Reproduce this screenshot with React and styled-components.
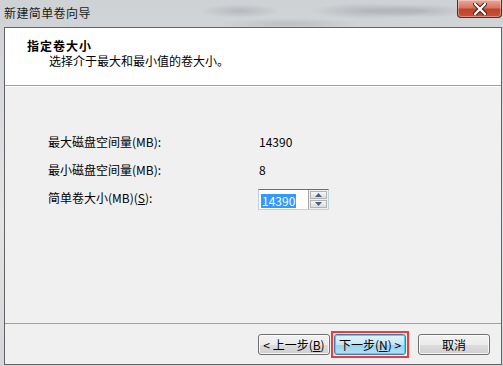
import React from 'react';
import styled, { createGlobalStyle } from 'styled-components';

const GlobalStyle = createGlobalStyle`
	html, body {
		margin: 0;
		padding: 0;
		background: #d6d8da;
	}
	body {
		font-family: "Noto Sans CJK SC", "DejaVu Sans", sans-serif;
		font-size: 12px;
		color: #000;
	}
`;

const Frame = styled.div`
	width: 503px;
	height: 366px;
	box-sizing: border-box;
	padding: 0 1px 1px 4px;
	display: flex;
	flex-direction: column;
	background:
		radial-gradient(ellipse 60px 8px at 370px 11px, rgba(120, 124, 130, 0.35), transparent),
		radial-gradient(ellipse 40px 7px at 240px 11px, rgba(120, 124, 130, 0.3), transparent),
		radial-gradient(ellipse 70px 6px at 290px 24px, rgba(120, 124, 130, 0.25), transparent),
		radial-gradient(ellipse 50px 7px at 420px 11px, rgba(120, 124, 130, 0.3), transparent),
		linear-gradient(180deg, #cfd2d5 0%, #e2e4e6 60%, #d4d6d9 100%);
`;

const TitleBar = styled.div`
	height: 27px;
	display: flex;
	justify-content: space-between;
	align-items: flex-start;
	flex-shrink: 0;
`;

const TitleText = styled.div`
	padding-top: 6px;
	font-size: 12px;
	line-height: 14px;
	letter-spacing: 0.4px;
	color: #1a1a1a;
`;

const CloseButton = styled.div`
	width: 45px;
	height: 18px;
	box-sizing: border-box;
	border: 1px solid #5a2a22;
	border-top: none;
	border-radius: 0 0 4px 4px;
	background: linear-gradient(180deg, #e9a899 0%, #d77662 45%, #c2412a 55%, #c9523a 100%);
	box-shadow: inset 0 0 0 1px rgba(255, 255, 255, 0.35);
	display: flex;
	align-items: center;
	justify-content: center;
`;

const Client = styled.div`
	flex: 1;
	display: flex;
	flex-direction: column;
	border: 1px solid #636363;
	background: #f0f0f0;
`;

const Header = styled.div`
	height: 58px;
	box-sizing: border-box;
	padding: 11px 0 0 22px;
	background: #fff;
	border-bottom: 1px solid #a0a0a0;
`;

const HeaderTitle = styled.div`
	font-size: 12px;
	line-height: 14px;
	font-weight: bold;
	letter-spacing: 1px;
`;

const HeaderSub = styled.div`
	margin: 1px 0 0 22px;
	font-size: 12px;
	line-height: 14px;
`;

const Body = styled.div`
	flex: 1;
	padding: 41px 0 0 43px;
	border-top: 1px solid #fff;
`;

const Row = styled.div`
	height: 28px;
	display: grid;
	grid-template-columns: 210px auto;
	align-items: center;
`;

const Label = styled.span`
	font-size: 12px;
	line-height: 14px;
`;

const Value = styled.span`
	padding-left: 1px;
	font-size: 12px;
	line-height: 14px;
`;

const Underline = styled.span`
	text-decoration: underline;
`;

const SpinBox = styled.div`
	display: flex;
	width: 71px;
	height: 21px;
	box-sizing: border-box;
	margin-top: 3px;
	border: 1px solid #b7d3ea;
	border-top-color: #3d7bad;
	background: #fff;
`;

const SpinInput = styled.div`
	flex: 1;
	padding: 2px 0 0 2px;
`;

const Selected = styled.span`
	display: inline-block;
	background: #3399ff;
	color: #fff;
	font-size: 12px;
	line-height: 14px;
	padding: 0 1px;
`;

const SpinButtons = styled.div`
	width: 17px;
	display: flex;
	flex-direction: column;
	gap: 1px;
	padding: 1px;
	background: #f0f0f0;
	border-left: 1px solid #a9a9a9;
`;

const SpinButton = styled.div`
	flex: 1;
	display: flex;
	align-items: center;
	justify-content: center;
	border: 1px solid #b4b4b4;
	background: linear-gradient(180deg, #f6f6f6, #dcdcdc);
`;

const Footer = styled.div`
	height: 41px;
	box-sizing: border-box;
	border-top: 1px solid #a0a0a0;
	padding: 10px 11px 0 0;
	display: flex;
	justify-content: flex-end;
	align-items: flex-start;
	gap: 1px;
`;

const Marker = styled.div`
	margin-top: -3px;
	padding: 1px;
	border: 2px solid #ee3b3b;
`;

const Button = styled.div`
	width: 72px;
	height: 21px;
	box-sizing: border-box;
	border: 1px solid ${({ focused }) => (focused ? '#3c7fb1' : '#707070')};
	border-radius: 3px;
	background: ${({ focused }) =>
		focused
			? 'linear-gradient(180deg, #e5f4fc 0%, #c4e5f6 50%, #98d1ef 51%, #b3e0f7 100%)'
			: 'linear-gradient(180deg, #f2f2f2 0%, #ebebeb 50%, #dddddd 51%, #cfcfcf 100%)'};
	box-shadow: inset 0 0 0 1px ${({ focused }) => (focused ? '#48d4f5' : 'rgba(255,255,255,0.8)')};
	display: flex;
	align-items: center;
	justify-content: center;
	font-size: 12px;
	line-height: 14px;
	margin-left: ${({ gapLeft }) => gapLeft || 0}px;
`;

const Arrow = ({ up }) => (
	<svg width="7" height="4" viewBox="0 0 7 4">
		<path d={up ? 'M0 4 L3.5 0 L7 4 Z' : 'M0 0 L3.5 4 L7 0 Z'} fill="#4a5f86" />
	</svg>
);

const CloseIcon = () => (
	<svg width="14" height="12" viewBox="0 0 14 12">
		<path
			d="M2 1 L12 11 M12 1 L2 11"
			stroke="#3a1a16"
			strokeWidth="4.2"
			strokeLinecap="round"
		/>
		<path d="M2 1 L12 11 M12 1 L2 11" stroke="#fff" strokeWidth="2.4" strokeLinecap="round" />
	</svg>
);

export default function App() {
	return (
		<>
			<GlobalStyle />
			<Frame>
				<TitleBar>
					<TitleText>新建简单卷向导</TitleText>
					<CloseButton>
						<CloseIcon />
					</CloseButton>
				</TitleBar>
				<Client>
					<Header>
						<HeaderTitle>指定卷大小</HeaderTitle>
						<HeaderSub>选择介于最大和最小值的卷大小。</HeaderSub>
					</Header>
					<Body>
						<Row>
							<Label>最大磁盘空间量(MB):</Label>
							<Value>14390</Value>
						</Row>
						<Row>
							<Label>最小磁盘空间量(MB):</Label>
							<Value>8</Value>
						</Row>
						<Row>
							<Label>
								简单卷大小(MB)(<Underline>S</Underline>):
							</Label>
							<SpinBox>
								<SpinInput>
									<Selected>14390</Selected>
								</SpinInput>
								<SpinButtons>
									<SpinButton>
										<Arrow up />
									</SpinButton>
									<SpinButton>
										<Arrow />
									</SpinButton>
								</SpinButtons>
							</SpinBox>
						</Row>
					</Body>
					<Footer>
						<Button>
							&lt; 上一步(<Underline>B</Underline>)
						</Button>
						<Marker>
							<Button focused>
								下一步(<Underline>N</Underline>) &gt;
							</Button>
						</Marker>
						<Button gapLeft={8}>取消</Button>
					</Footer>
				</Client>
			</Frame>
		</>
	);
}
